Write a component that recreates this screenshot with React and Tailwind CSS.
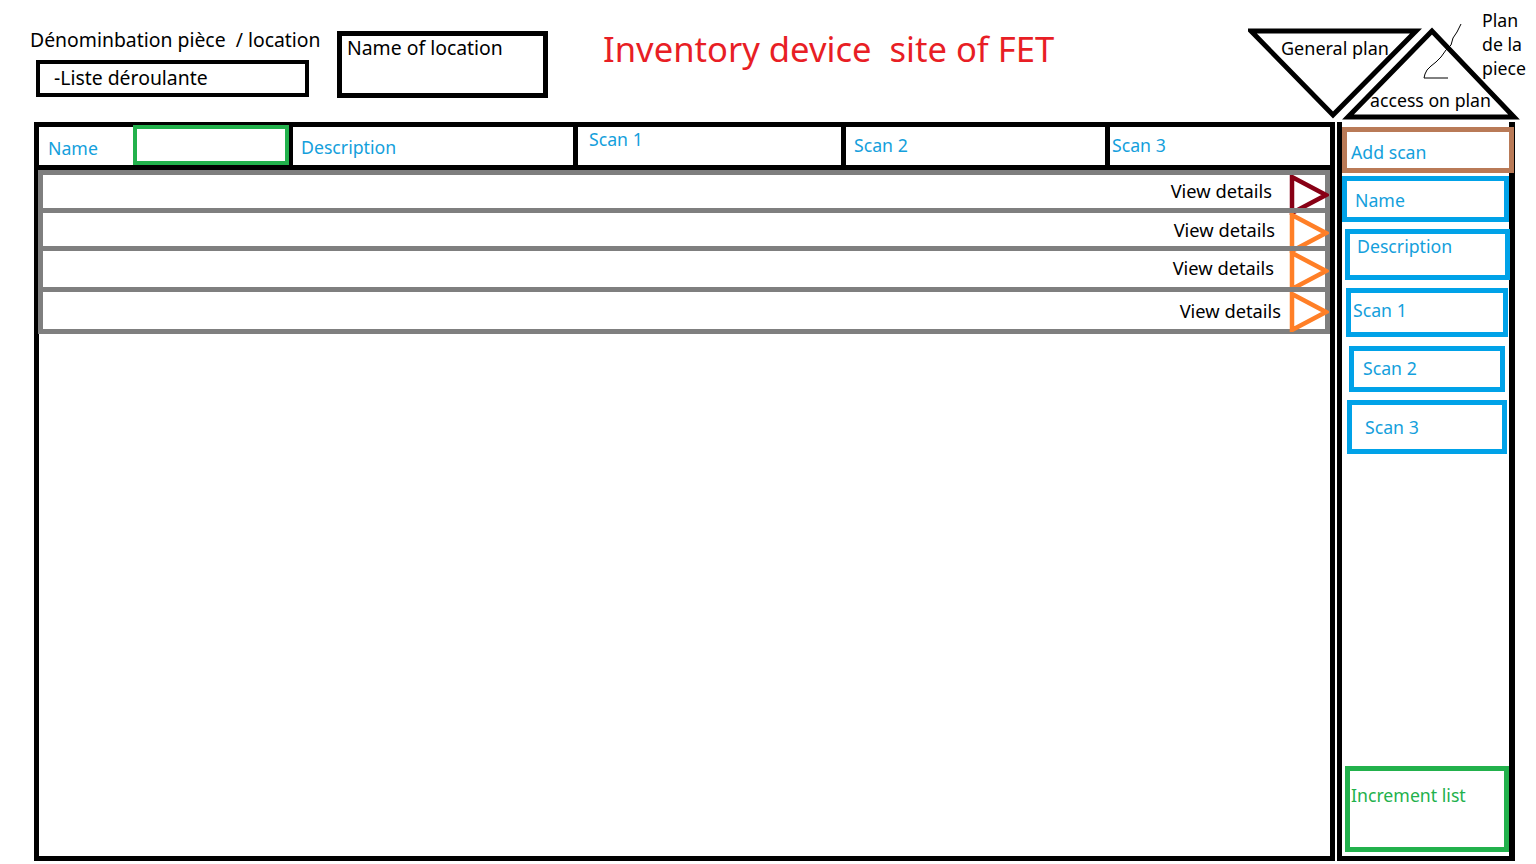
import React from "react";

const BLUE_TEXT = "text-[#14a0dc] text-[17.7px]";

const rows = [
  { h: "h-[38px]", pr: "pr-[53px]", color: "#880015", pt: "pt-[4px]" },
  { h: "h-[38px]", pr: "pr-[50px]", color: "#ff7f27", pt: "pt-[5px]" },
  { h: "h-[41px]", pr: "pr-[51px]", color: "#ff7f27", pt: "pt-[5px]" },
  { h: "h-[42px]", pr: "pr-[44px]", color: "#ff7f27", pt: "pt-[7px]" },
];

const RowArrow = ({ color }) => (
  <svg
    className="absolute right-[-4px] top-[0px]"
    width="40"
    height="40"
    viewBox="0 0 40 40"
  >
    <polygon
      points="3,2 37,20 3,38"
      fill="none"
      stroke={color}
      strokeWidth="4.5"
      strokeLinejoin="miter"
    />
  </svg>
);

const PlanTriangles = () => (
  <div className="relative ml-auto w-[288px] h-[122px]">
    <svg className="absolute left-0 top-0" width="288" height="122" viewBox="0 0 288 122">
      <polygon points="3,31 168,31 85,115" fill="none" stroke="#000" strokeWidth="5" strokeLinejoin="miter" />
      <polygon points="184,31 100,117 266,117" fill="none" stroke="#000" strokeWidth="5" strokeLinejoin="miter" />
      <path
        d="M213,24 L209,32 L205,38 L203,45 L198,50 L193,57 L188,62 L183,66 L179,70 L177,74 L176,78 L200,78"
        fill="none"
        stroke="#000"
        strokeWidth="1"
      />
    </svg>
    <span className="absolute left-[33px] top-[36px] text-[18px] leading-[24px] text-black">General plan</span>
    <span className="absolute left-[122px] top-[88px] text-[17.7px] leading-[24px] text-black">access on plan</span>
    <div className="absolute left-[234px] top-[8px] flex flex-col text-[17.7px] leading-[24px] text-black">
      <span>Plan</span>
      <span>de la</span>
      <span>piece</span>
    </div>
  </div>
);

export default function App() {
  return (
    <div
      className="w-[1536px] h-[864px] bg-white overflow-hidden text-black"
      style={{ fontFamily: '"Noto Sans", "Open Sans", sans-serif' }}
    >
      <header className="flex items-start h-[122px]">
        <div className="w-[307px] ml-[30px] mt-[27px] flex flex-col">
          <span className="text-[19.4px] leading-[26px] whitespace-pre">Dénominbation pièce  / location</span>
          <div className="ml-[6px] mt-[7px] w-[273px] h-[37px] border-[4px] border-black pl-[14px] text-[19.4px] leading-[27px]">
            -Liste déroulante
          </div>
        </div>
        <div className="mt-[31px] w-[211px] h-[67px] border-[5px] border-black pl-[5px] text-[19.4px] leading-[24px]">
          Name of location
        </div>
        <h1 className="ml-[55px] mt-[25px] text-[34.6px] leading-[48px] text-[#e81e25] whitespace-pre">
          Inventory device  site of FET
        </h1>
        <PlanTriangles />
      </header>

      <main className="flex">
        <section className="ml-[34px] w-[1301px] h-[739px] border-[5px] border-black flex flex-col">
          <div className="flex h-[43px] border-b-[5px] border-black leading-[24px]">
            <div className={`w-[94px] pl-[9px] pt-[9px] ${BLUE_TEXT}`}>Name</div>
            <div className="w-[156px] h-[40px] -mt-[2px] border-[4px] border-[#22b14c]" />
            <div className={`w-[284px] border-l-[4px] border-black pl-[8px] pt-[8px] ${BLUE_TEXT}`}>Description</div>
            <div className={`w-[268px] border-l-[5px] border-black pl-[11px] pt-[0px] ${BLUE_TEXT}`}>Scan 1</div>
            <div className={`w-[264px] border-l-[5px] border-black pl-[8px] pt-[6px] ${BLUE_TEXT}`}>Scan 2</div>
            <div className={`flex-1 border-l-[5px] border-black pl-[2px] pt-[6px] ${BLUE_TEXT}`}>Scan 3</div>
          </div>

          <div className="flex flex-col -ml-[1px]">
            {rows.map((r, i) => (
              <div
                key={i}
                className={`relative ${r.h} border-x-[5px] border-t-[5px] border-[#7f7f7f] ${
                  i === rows.length - 1 ? "h-[47px] border-b-[5px]" : ""
                } flex justify-end items-start ${r.pt} ${r.pr} text-[18.3px] leading-[24px]`}
              >
                <span>View details</span>
                <RowArrow color={r.color} />
              </div>
            ))}
          </div>
        </section>

        <aside className="ml-[2px] w-[178px] h-[739px] border-l-[5px] border-r-[6px] border-b-[5px] border-black flex flex-col leading-[24px]">
          <div className={`mt-[5px] w-[172px] h-[46px] border-[5px] border-[#b97a57] pl-[4px] pt-[8px] ${BLUE_TEXT}`}>
            Add scan
          </div>
          <div className={`mt-[3px] w-[167px] h-[46px] border-[5px] border-[#00a2e8] pl-[8px] pt-[7px] ${BLUE_TEXT}`}>
            Name
          </div>
          <div className={`mt-[7px] ml-[3px] w-[165px] h-[51px] border-[5px] border-[#00a2e8] pl-[7px] pt-[0px] ${BLUE_TEXT}`}>
            Description
          </div>
          <div className={`mt-[8px] ml-[4px] w-[162px] h-[49px] border-[5px] border-[#00a2e8] pl-[2px] pt-[5px] ${BLUE_TEXT}`}>
            Scan 1
          </div>
          <div className={`mt-[9px] ml-[7px] w-[156px] h-[46px] border-[5px] border-[#00a2e8] pl-[9px] pt-[5px] ${BLUE_TEXT}`}>
            Scan 2
          </div>
          <div className={`mt-[8px] ml-[5px] w-[160px] h-[54px] border-[5px] border-[#00a2e8] pl-[13px] pt-[10px] ${BLUE_TEXT}`}>
            Scan 3
          </div>
          <div className="mt-auto mb-[4px] ml-[3px] w-[164px] h-[86px] border-[5px] border-[#22b14c] pl-[1px] pt-[12px] text-[17.7px] text-[#22b14c]">
            Increment list
          </div>
        </aside>
      </main>
    </div>
  );
}
